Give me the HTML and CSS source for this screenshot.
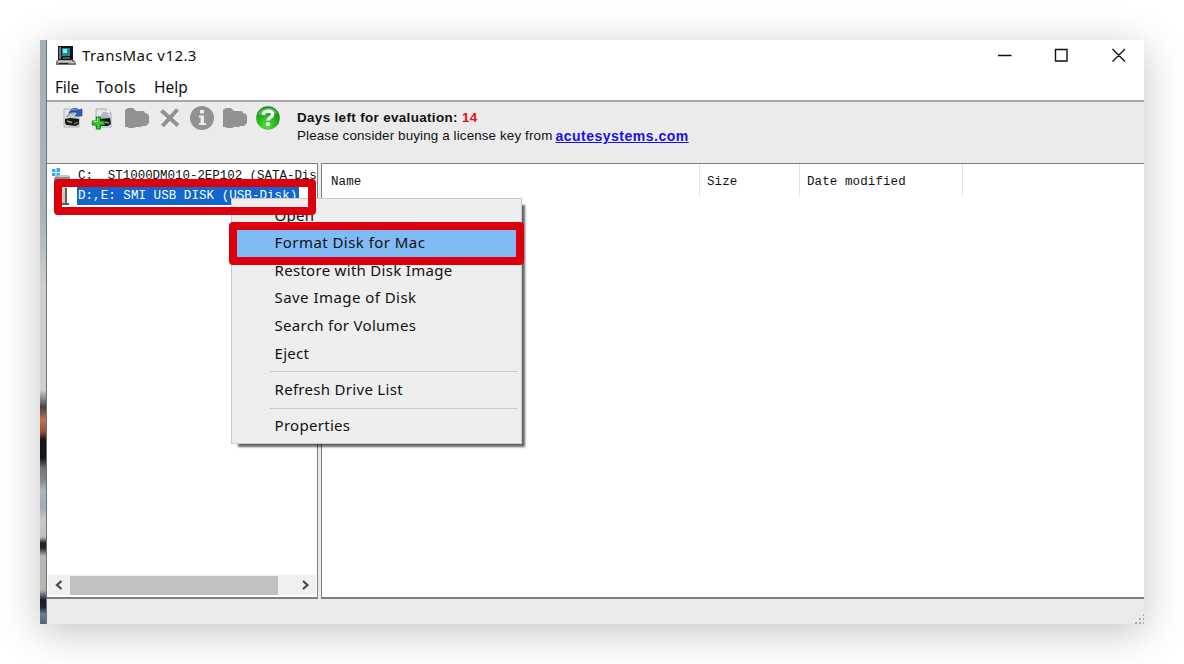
FILE: index.html
```html
<!DOCTYPE html>
<html lang="en">
<head>
<meta charset="utf-8">
<title>TransMac v12.3</title>
<link rel="stylesheet" href="styles.css">
</head>
<body>
<div class="window">
  <div class="desktop-edge"></div>
  <div class="app">
    <header class="titlebar">
      <svg class="app-icon" width="22" height="22" viewBox="0 0 22 22">
        <path d="M3 1h15v14H3z" fill="#161616"/><path d="M4 2h2v12H4z" fill="#77777a"/>
        <path d="M7 3h8v8H7z" fill="#168e93"/><path d="M8 4h4v4H8z" fill="#86efe5"/>
        <path d="M8 12h7v2H8z" fill="#555"/>
        <path d="M2 15h17l2 3v2H1v-3z" fill="#777"/><path d="M3 15.5h14v2H3z" fill="#c9c9c9"/><path d="M4 18h9v1H4z" fill="#222"/><path d="M16 17h3v1h-3z" fill="#ddd"/>
      </svg>
      <h1 class="title">TransMac v12.3</h1>
      <svg class="controls" width="130" height="16" viewBox="0 0 130 16" fill="none" stroke="#111" stroke-width="1.4">
        <path d="M0 7.500h13.500M57.500 1.500h11.500v11.500h-11.500zM114.500 1l12.500 12.500M127 1l-12.500 12.500"/>
      </svg>
    </header>
    <nav class="menubar"><span class="m-file">File</span><span class="m-tools">Tools</span><span class="m-help">Help</span></nav>
    <div class="toolbar">
      <div class="tools">
        <svg width="22" height="24" viewBox="0 0 22 24">
          <path d="M3 3h9l6 4v14H3z" fill="#e4e8ee" stroke="#9a9ea6" stroke-width=".8"/>
          <path d="M4 12l4-6h5l5 5v2H4z" fill="#c3c7ce"/><path d="M6 11l3-4h4" stroke="#7d828b" fill="none"/>
          <path d="M4 13l5-1 9 1v5l-3 2-10-1-1-2z" fill="#171717"/><path d="M6 15l5 1.500" stroke="#a3a64a" stroke-width="1.500"/><path d="M13 18l4-2" stroke="#888" stroke-width="1.200"/>
          <path d="M8 7c2-5 7-6 10-3l3-1v7h-7l2-2.500c-2-2-5-2-8-.5z" fill="#2b5cae" stroke="#183f86" stroke-width=".6"/><path d="M10.500 4.500c2-1.500 4-1.500 6-.5" stroke="#79a7ee" fill="none"/>
        </svg>
        <svg width="22" height="24" viewBox="0 0 22 24">
          <path d="M5 3h10l5 4v14H5z" fill="#e4e8ee" stroke="#9a9ea6" stroke-width=".8"/>
          <path d="M15 3v4h5" fill="#fff" stroke="#9a9ea6" stroke-width=".8"/>
          <path d="M8 12l4-6h3l5 6v2H8z" fill="#b3b8c2"/><path d="M8 13l11-1 1 6-3 2H8z" fill="#171717"/><path d="M13 16l5 1" stroke="#999" stroke-width="1.500"/>
          <path d="M4.500 12.500h4v4h4v4h-4v4h-4v-4h-4v-4h4z" transform="translate(.8 -1.500)" fill="#38c62c" stroke="#127912"/><path d="M6.500 12v3.500H2.500" fill="none" stroke="#9bf582"/>
        </svg>
        <svg class="folder" width="26" height="24" viewBox="0 0 26 24"><path d="M1 4l3-2h5l3 3h7q2 0 2 2l3 1 1 2v7l-3 3h-4l-1 1h-5l-2 1H5l-2-1H1z" fill="#929292"/></svg>
        <svg class="delete" width="22" height="24" viewBox="0 0 22 24"><path d="M2.500 4.500L19 19.500M18.500 3.500L3.500 20" stroke="#929292" stroke-width="4"/></svg>
        <svg class="info" width="26" height="24" viewBox="0 0 26 24"><circle cx="13" cy="12" r="12" fill="#929292"/><path d="M11 4h4v3.500h-4zM10 9.500h5V17h2v2h-7v-2h1.500v-5.500H10z" fill="#ebebeb"/></svg>
        <svg class="folder-next" width="26" height="24" viewBox="0 0 26 24"><path d="M1 4l3-2h5l3 3h7q2 0 2 2l3 1 1 2v7l-3 3h-4l-1 1h-5l-2 1H5l-2-1H1z" fill="#929292"/></svg>
        <svg class="help" width="26" height="24" viewBox="0 0 26 24">
          <defs><radialGradient id="green" cx=".45" cy=".8" r=".8"><stop offset="0" stop-color="#54e53a"/><stop offset=".6" stop-color="#22a91c"/><stop offset="1" stop-color="#16851a"/></radialGradient></defs>
          <circle cx="13" cy="12" r="11.800" fill="url(#green)"/><path d="M3 9a10.500 10 0 0 1 19.500-1.500Q13 6 3 9z" fill="#8ee783" opacity=".55"/>
          <path d="M8.500 9c0-5 9.200-5 9.200-.6 0 3.200-4.700 2.800-4.700 6.200" fill="none" stroke="#fff" stroke-width="3.400"/><circle cx="13" cy="18.300" r="2" fill="#fff"/>
        </svg>
      </div>
      <div class="notice">
        <p class="days">Days left for evaluation: <span class="count">14</span></p>
        <p class="buy"><span class="buy-text">Please consider buying a license key from</span><a class="link">acutesystems.com</a></p>
      </div>
    </div>
    <main class="panes">
      <section class="tree">
        <div class="tree-row row-c">
          <svg width="20" height="20" viewBox="0 0 20 20"><path d="M1 4h3.500v3H1zM5.500 3H9v4H5.500zM1 8h3.500v3H1zM5.500 8H9v3H5.500z" fill="#2aaef0"/><path d="M5 11l2-1h10l2 2v5H3v-4z" fill="#8b8f93"/><path d="M7 10h10l1 2H5z" fill="#c6c9cc"/></svg>
          <span class="tree-text">C:&nbsp; ST1000DM010-2EP102 (SATA-Dis</span>
        </div>
        <div class="tree-row">
          <svg width="20" height="20" viewBox="0 0 20 20"><path d="M7 1h8v17H7z" fill="#cfc7bb"/><path d="M9 3h3v12H9z" fill="#e8d8ab"/><path d="M14 2h2v16h-2zM11 17h7v2h-7z" fill="#5f5f5f"/></svg>
          <span class="tree-text selected">D:,E: SMI USB DISK (USB-Disk)</span>
        </div>
        <div class="scrollbar">
          <svg width="22" height="20" viewBox="0 0 22 20"><path d="M13.500 6l-4.500 4 4.500 4" fill="none" stroke="#484848" stroke-width="2.200"/></svg>
          <div class="thumb"></div>
          <svg class="arrow-right" width="26" height="20" viewBox="0 0 26 20"><path d="M13 6l4.500 4-4.500 4" fill="none" stroke="#484848" stroke-width="2.200"/></svg>
        </div>
      </section>
      <section class="files">
        <div class="columns"><span class="col col-name">Name</span><span class="col col-size">Size</span><span class="col col-date">Date modified</span></div>
      </section>
    </main>
    <footer class="statusbar"><svg width="9" height="10" viewBox="0 0 9 10" fill="#aaa"><path d="M8 0h1v2H8zM4 4h2v2H4zM8 4h1v2H8zM0 8h2v2H0zM4 8h2v2H4zM8 8h1v2H8z"/></svg></footer>
  </div>
  <div class="context-menu">
    <div class="item i-open">Open</div>
    <div class="item active i-format">Format Disk for Mac</div>
    <div class="item i-restore">Restore with Disk Image</div>
    <div class="item i-save">Save Image of Disk</div>
    <div class="item i-search">Search for Volumes</div>
    <div class="item i-eject">Eject</div>
    <div class="separator"></div>
    <div class="item i-refresh">Refresh Drive List</div>
    <div class="separator"></div>
    <div class="item i-props">Properties</div>
  </div>
  <div class="mark mark-disk"></div>
  <div class="mark mark-format"></div>
</div>
</body>
</html>
```
FILE: styles.css
```css
* { box-sizing: border-box; }
body { margin: 0; height: 664px; padding: 40px; background: #fff; overflow: hidden; font-family: "Noto Sans", "Open Sans", sans-serif; color: #111; }
h1, p { margin: 0; font-weight: 400; }
svg { display: block; flex: none; }
.window { position: relative; display: flex; width: 1104px; height: 584px; box-shadow: 0 8px 38px rgba(0, 0, 0, .24); }
.desktop-edge { width: 6px; background: linear-gradient(#a3b0bb 0, #a9b3b9 180px, #cfd2d2 250px, #cdd0d0 350px, #444 367px, #c56f53 380px, #9d4b35 392px, #171416 400px, #16171c 418px, #77707a 428px, #8a858a 440px, #a7b3c4 450px, #a2adbb 468px, #c9c9c8 480px, #c0bfbd 497px, #202329 503px, #24272c 508px, #b9b6b2 516px, #bab4ae 550px, #171d23 560px, #1a242d 567px, #6b7f95 574px, #526377 584px); }
.app { display: flex; flex-direction: column; flex: 1; min-width: 0; border-left: 1px solid #6d7276; background: #ebebeb; }
.titlebar { display: flex; align-items: center; height: 31px; padding-left: 8px; background: #fff; }
.title { margin-left: 5px; font-size: 15px; line-height: 31px; letter-spacing: .43px; white-space: nowrap; }
.controls { margin-left: auto; margin-right: 16px; }
.menubar { display: flex; height: 29px; background: #fff; font-size: 15.5px; line-height: 32px; padding-left: 8px; }
.m-file { width: 41px; letter-spacing: -.2px; }
.m-tools { width: 58px; letter-spacing: .5px; }
.toolbar { display: flex; height: 63px; border-top: 2px solid #a9a9a9; padding: 4px 0 0 14px; }
.tools { display: flex; gap: 8px; width: 236px; flex: none; }
.folder { margin-left: 3px; }
.delete { margin-left: 1px; }
.folder-next { margin-left: -1px; }
.help { margin-left: -1px; }
.notice { font: 13.4px/18px "Liberation Sans", sans-serif; padding-top: 3px; white-space: nowrap; }
.days { font-weight: 700; letter-spacing: .36px; }
.count { color: #e80c12; }
.buy { display: flex; gap: 3px; letter-spacing: .13px; }
.link { color: #1b10e6; font-size: 14px; font-weight: 700; letter-spacing: .5px; text-decoration: underline; }
.panes { display: flex; gap: 3px; height: 436px; }
.tree { display: flex; flex-direction: column; width: 271px; background: #fff; border: solid #7b7e82; border-width: 1.5px 1px 2px 0; overflow: hidden; padding-top: 1px; }
.tree-row { display: flex; height: 21px; gap: 7px; padding-left: 4px; font: 12.5px/21px "Liberation Mono", monospace; color: #111; white-space: nowrap; }
.tree-text { height: 19px; padding: 0 1px 0 0; }
.selected { background: #1266cc; color: #fff; padding: 0 2px 0 1px; margin-left: -1px; letter-spacing: .06px; }
.row-c .tree-text { letter-spacing: -.04px; line-height: 22px; }
.scrollbar { display: flex; align-items: center; height: 20px; margin: auto 1px 2px 1px; background: #f0f0f0; }
.thumb { width: 208px; height: 19px; background: #c1c1c1; }
.arrow-right { margin-left: auto; }
.files { flex: 1; background: #fff; border: solid #7b7e82; border-width: 1.5px 0 2px 1px; }
.columns { display: flex; height: 32px; font: 12.5px/36px "Liberation Mono", monospace; letter-spacing: .1px; }
.col { border-right: 1px solid #e3e3e3; padding-left: 7px; }
.col-name { width: 378px; padding-left: 9px; }
.col-size { width: 100px; }
.col-date { width: 163px; }
.statusbar { display: flex; flex: 1; justify-content: flex-end; align-items: flex-end; }
.context-menu { position: absolute; left: 191px; top: 158px; width: 291px; height: 246px; padding: 2.700px 2px 0; background: #eee; border: 1px solid #c9c9c9; box-shadow: 5px 5px 2px -2px rgba(0, 0, 0, .6); font-size: 15px; letter-spacing: .3px; white-space: nowrap; }
.item { height: 27.600px; line-height: 27.600px; padding-left: 40.5px; }
.active { background: #80bbf5; }
.i-format { letter-spacing: .45px; }
.i-save { letter-spacing: .45px; }
.separator { height: 8.800px; margin: 0 1px 0 36px; border-bottom: 4px solid transparent; border-top: 4px solid transparent; background: #cbcbcb; background-clip: padding-box; }
.mark { position: absolute; border: 8px solid #dc000f; border-radius: 4px; }
.mark-disk { left: 13.500px; top: 139px; width: 262px; height: 36px; }
.mark-format { left: 189px; top: 182px; width: 295px; height: 43px; }
```
